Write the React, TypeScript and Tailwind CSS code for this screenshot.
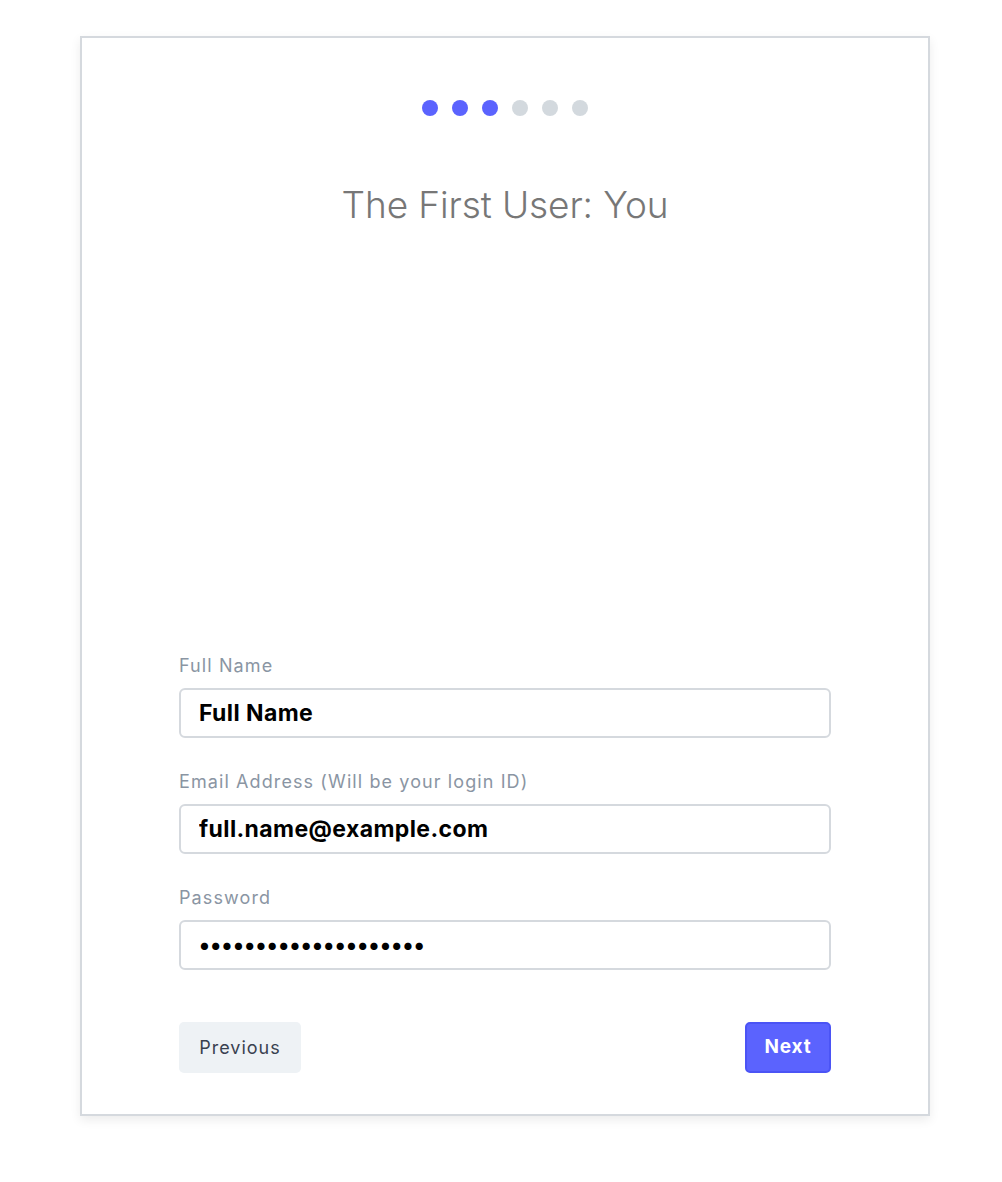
import React from "react";

export default function App() {
  const dots = [true, true, true, false, false, false];
  const labelCls = "text-[18px] leading-[24px] text-[#8a95a3] tracking-[1.1px]";
  const inputCls =
    "mt-[10px] h-[50px] w-full rounded-[6px] border-2 border-[#d5d9de] px-[18px] text-[23px] font-bold text-black tracking-[0.4px] outline-none";
  return (
    <div className="min-h-[1182px] w-[1002px] bg-white pt-[36px] pl-[80px]" style={{ fontFamily: "Inter, 'Noto Sans', sans-serif" }}>
      <div className="w-[850px] h-[1080px] border-2 border-[#d5d9de] bg-white shadow-[0_4px_10px_rgba(0,0,0,0.08)] flex flex-col items-center">
        <div className="mt-[62px] flex gap-[14px]">
          {dots.map((on, i) => (
            <div key={i} className={`w-[16px] h-[16px] rounded-full ${on ? "bg-[#5b63fe]" : "bg-[#d3d9de]"}`} />
          ))}
        </div>
        <h1 className="mt-[63px] text-[37px] leading-[52px] font-light text-[#777777] tracking-[-0.1px]">The First User: You</h1>
        <div className="h-[423px]" />
        <form className="w-[652px] flex flex-col">
          <label className={labelCls}>Full Name</label>
          <input readOnly value="Full Name" className={inputCls} />
          <label className={`mt-[32px] ${labelCls}`}>Email Address (Will be your login ID)</label>
          <input readOnly value="full.name@example.com" className={inputCls} />
          <label className={`mt-[32px] ${labelCls}`}>Password</label>
          <input readOnly type="password" value="aaaaaaaaaaaaaaaaaaaa" className={inputCls} />
          <div className="mt-[52px] flex justify-between">
            <button type="button" className="h-[51px] w-[122px] rounded-[5px] bg-[#eef2f5] text-[18px] text-[#394150] tracking-[1px]">Previous</button>
            <button type="button" className="h-[51px] w-[86px] rounded-[5px] border-2 border-[#4b54f5] bg-[#5b63fe] text-[19px] font-bold text-white tracking-[0.8px]">Next</button>
          </div>
        </form>
      </div>
    </div>
  );
}
